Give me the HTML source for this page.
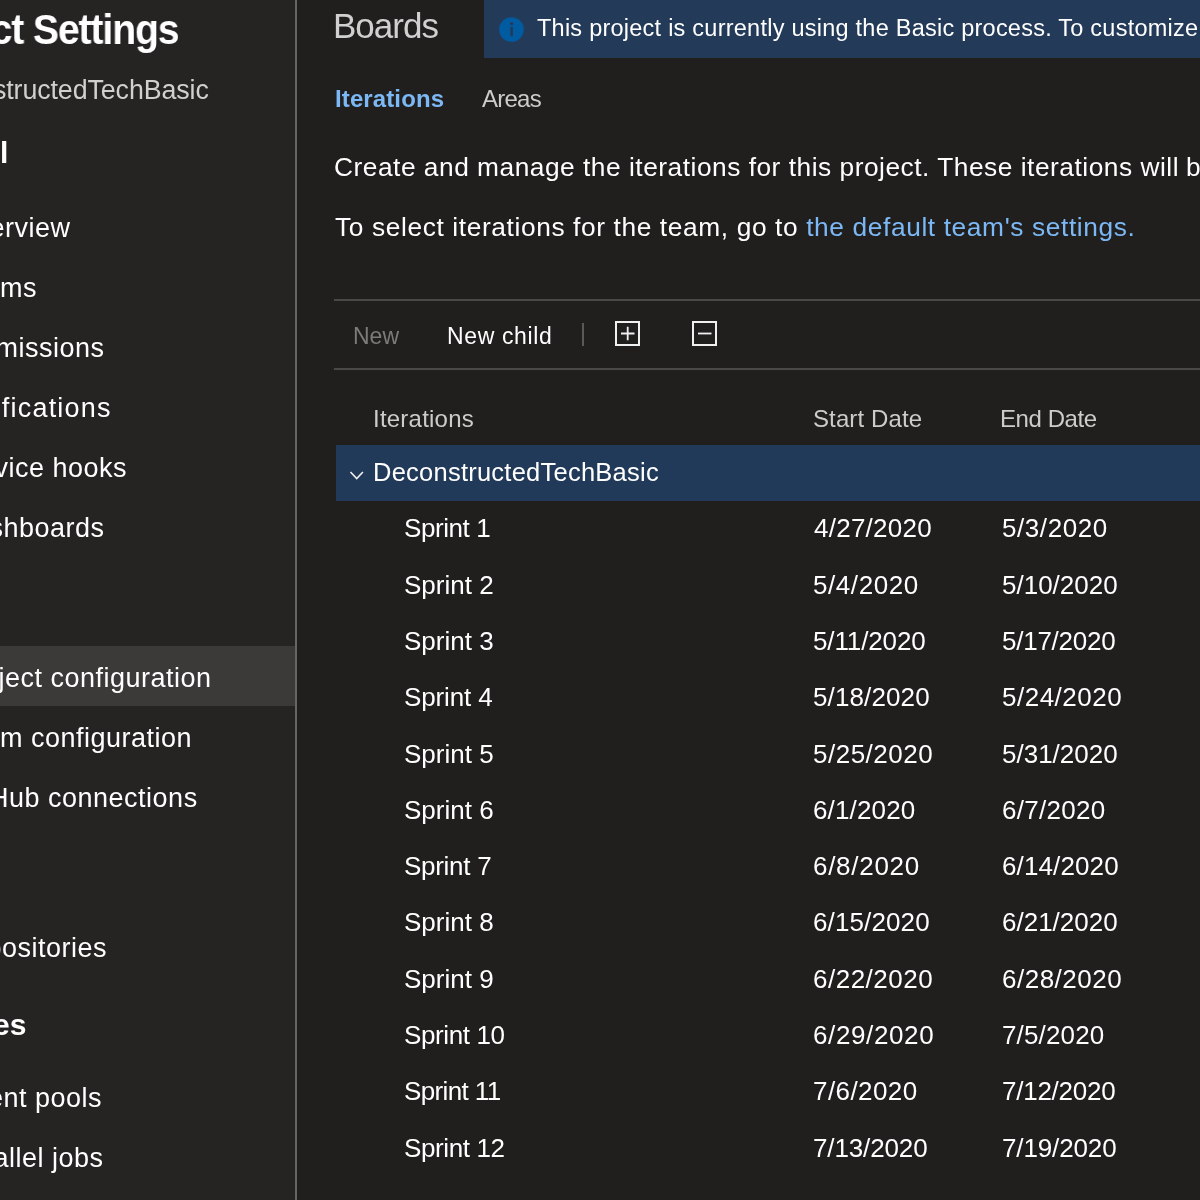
<!DOCTYPE html>
<html><head><meta charset="utf-8"><style>
html,body{margin:0;padding:0;width:1200px;height:1200px;overflow:hidden;background:#201f1e;font-family:"Liberation Sans",sans-serif}
.t{position:absolute;white-space:nowrap;will-change:transform}
.r{position:absolute}
</style></head><body>
<div class="r" style="left:0;top:0;width:295px;height:1200px;background:#252423"></div>
<div class="r" style="left:0;top:646px;width:295px;height:60px;background:#3b3a39"></div>
<div class="r" style="left:295px;top:0;width:2px;height:1200px;background:#666564"></div>
<div class="r" style="left:484px;top:0;width:716px;height:58px;background:#243a59"></div>
<svg class="r" style="left:499px;top:16.5px" width="25" height="25" viewBox="0 0 25 25">
<circle cx="12.5" cy="12.5" r="12.3" fill="#005ba1"/>
<circle cx="12.6" cy="6.6" r="1.6" fill="#243a59"/>
<rect x="11.3" y="9.8" width="2.6" height="9.4" rx="1" fill="#243a59"/>
</svg>
<div class="r" style="left:334px;top:298.5px;width:866px;height:2px;background:#4a4948"></div>
<div class="r" style="left:334px;top:368px;width:866px;height:2px;background:#4a4948"></div>
<div class="r" style="left:582px;top:323px;width:2px;height:23px;background:#5a5958"></div>
<svg class="r" style="left:614px;top:320px" width="28" height="28" viewBox="0 0 28 28">
<rect x="2" y="2" width="23" height="23" fill="none" stroke="#f0f0f0" stroke-width="2"/>
<path d="M7 13.5H20.5M13.7 6.7V20.2" stroke="#f0f0f0" stroke-width="1.8"/>
</svg>
<svg class="r" style="left:691px;top:320px" width="28" height="28" viewBox="0 0 28 28">
<rect x="2" y="2" width="23" height="23" fill="none" stroke="#f0f0f0" stroke-width="2"/>
<path d="M7 13.5H20.5" stroke="#f0f0f0" stroke-width="1.8"/>
</svg>
<div class="r" style="left:336px;top:445px;width:864px;height:56px;background:#223a5a"></div>
<svg class="r" style="left:348px;top:468px" width="18" height="14" viewBox="0 0 18 14">
<path d="M2.5 4L8.7 10.5L14.9 4" fill="none" stroke="#f0f0f0" stroke-width="1.6"/>
</svg>
<div class="t" id="e0" style="top:3.77px;font-size:42.5px;line-height:51.0px;font-weight:700;color:#ffffff;letter-spacing:-1.200px;transform:scaleX(0.92);transform-origin:right center;right:1021.50px">Project Settings</div>
<div class="t" id="e1" style="top:74.23px;font-size:26.8px;line-height:32.16px;font-weight:400;color:#d2d0ce;letter-spacing:-0.100px;right:991.50px">DeconstructedTechBasic</div>
<div class="t" id="e2" style="top:134.91px;font-size:30px;line-height:36.0px;font-weight:700;color:#ffffff;letter-spacing:0.000px;right:1191.50px">l</div>
<div class="t" id="e3" style="top:212.44px;font-size:27px;line-height:32.4px;font-weight:400;color:#ffffff;letter-spacing:0.500px;right:1129.40px">Overview</div>
<div class="t" id="e4" style="top:272.44px;font-size:27px;line-height:32.4px;font-weight:400;color:#ffffff;letter-spacing:0.500px;right:1163.20px">Teams</div>
<div class="t" id="e5" style="top:332.44px;font-size:27px;line-height:32.4px;font-weight:400;color:#ffffff;letter-spacing:0.500px;right:1095.30px">Permissions</div>
<div class="t" id="e6" style="top:392.44px;font-size:27px;line-height:32.4px;font-weight:400;color:#ffffff;letter-spacing:1.200px;right:1088.30px">Notifications</div>
<div class="t" id="e7" style="top:452.44px;font-size:27px;line-height:32.4px;font-weight:400;color:#ffffff;letter-spacing:0.500px;right:1072.70px">Service hooks</div>
<div class="t" id="e8" style="top:512.44px;font-size:27px;line-height:32.4px;font-weight:400;color:#ffffff;letter-spacing:0.500px;right:1095.70px">Dashboards</div>
<div class="t" id="e9" style="top:662.44px;font-size:27px;line-height:32.4px;font-weight:400;color:#ffffff;letter-spacing:0.500px;right:988.10px">Project configuration</div>
<div class="t" id="e10" style="top:722.44px;font-size:27px;line-height:32.4px;font-weight:400;color:#ffffff;letter-spacing:0.500px;right:1008.10px">Team configuration</div>
<div class="t" id="e11" style="top:782.44px;font-size:27px;line-height:32.4px;font-weight:400;color:#ffffff;letter-spacing:0.500px;right:1002.30px">GitHub connections</div>
<div class="t" id="e12" style="top:932.44px;font-size:27px;line-height:32.4px;font-weight:400;color:#ffffff;letter-spacing:0.500px;right:1092.50px">Repositories</div>
<div class="t" id="e13" style="top:1082.44px;font-size:27px;line-height:32.4px;font-weight:400;color:#ffffff;letter-spacing:0.500px;right:1098.10px">Agent pools</div>
<div class="t" id="e14" style="top:1142.44px;font-size:27px;line-height:32.4px;font-weight:400;color:#ffffff;letter-spacing:0.500px;right:1096.00px">Parallel jobs</div>
<div class="t" id="e15" style="top:1006.61px;font-size:30px;line-height:36.0px;font-weight:700;color:#ffffff;letter-spacing:0.000px;right:1173.50px">es</div>
<div class="t" id="e16" style="top:4.87px;font-size:35px;line-height:42.0px;font-weight:400;color:#d0d0d0;letter-spacing:-1.000px;left:332.50px">Boards</div>
<div class="t" id="e17" style="top:13.76px;font-size:23.5px;line-height:28.2px;font-weight:400;color:#ffffff;letter-spacing:0.242px;left:537.00px">This project is currently using the Basic process. To customize</div>
<div class="t" id="e18" style="top:84.88px;font-size:24px;line-height:28.8px;font-weight:700;color:#7cb8f5;letter-spacing:0.111px;left:334.50px">Iterations</div>
<div class="t" id="e19" style="top:84.88px;font-size:24px;line-height:28.8px;font-weight:400;color:#cecccb;letter-spacing:-0.750px;left:482.00px">Areas</div>
<div class="t" id="e20" style="top:151.61px;font-size:26.3px;line-height:31.56px;font-weight:400;color:#ffffff;letter-spacing:0.516px;left:334.00px">Create and manage the iterations for this project. These iterations will</div>
<div class="t" id="e21" style="top:151.61px;font-size:26.3px;line-height:31.56px;font-weight:400;color:#ffffff;letter-spacing:0.550px;left:1185.50px">be used by teams</div>
<div class="t" id="e22" style="top:212.11px;font-size:26.3px;line-height:31.56px;font-weight:400;color:#ffffff;letter-spacing:0.618px;left:335.00px">To select iterations for the team, go to <span style='color:#7cb8f5'>the default team's settings.</span></div>
<div class="t" id="e23" style="top:323.03px;font-size:23px;line-height:27.6px;font-weight:400;color:#7d7b79;letter-spacing:-0.000px;left:352.70px">New</div>
<div class="t" id="e24" style="top:323.03px;font-size:23px;line-height:27.6px;font-weight:400;color:#ffffff;letter-spacing:0.625px;left:446.50px">New child</div>
<div class="t" id="e25" style="top:404.78px;font-size:24px;line-height:28.8px;font-weight:400;color:#cecccb;letter-spacing:0.222px;left:372.70px">Iterations</div>
<div class="t" id="e26" style="top:404.78px;font-size:24px;line-height:28.8px;font-weight:400;color:#cecccb;letter-spacing:0.111px;left:812.90px">Start Date</div>
<div class="t" id="e27" style="top:404.78px;font-size:24px;line-height:28.8px;font-weight:400;color:#cecccb;letter-spacing:-0.429px;left:1000.10px">End Date</div>
<div class="t" id="e28" style="top:456.56px;font-size:25.5px;line-height:30.6px;font-weight:400;color:#ffffff;letter-spacing:0.238px;left:373.00px">DeconstructedTechBasic</div>
<div class="t" id="e29" style="top:513.29px;font-size:26px;line-height:31.2px;font-weight:400;color:#ffffff;letter-spacing:-0.429px;left:403.50px">Sprint 1</div>
<div class="t" id="e30" style="top:513.29px;font-size:26px;line-height:31.2px;font-weight:400;color:#ffffff;letter-spacing:0.250px;left:814.20px">4/27/2020</div>
<div class="t" id="e31" style="top:513.29px;font-size:26px;line-height:31.2px;font-weight:400;color:#ffffff;letter-spacing:0.571px;left:1001.60px">5/3/2020</div>
<div class="t" id="e32" style="top:569.60px;font-size:26px;line-height:31.2px;font-weight:400;color:#ffffff;letter-spacing:-0.000px;left:403.50px">Sprint 2</div>
<div class="t" id="e33" style="top:569.60px;font-size:26px;line-height:31.2px;font-weight:400;color:#ffffff;letter-spacing:0.571px;left:813.20px">5/4/2020</div>
<div class="t" id="e34" style="top:569.60px;font-size:26px;line-height:31.2px;font-weight:400;color:#ffffff;letter-spacing:-0.000px;left:1001.60px">5/10/2020</div>
<div class="t" id="e35" style="top:625.91px;font-size:26px;line-height:31.2px;font-weight:400;color:#ffffff;letter-spacing:-0.000px;left:403.50px">Sprint 3</div>
<div class="t" id="e36" style="top:625.91px;font-size:26px;line-height:31.2px;font-weight:400;color:#ffffff;letter-spacing:-0.125px;left:813.20px">5/11/2020</div>
<div class="t" id="e37" style="top:625.91px;font-size:26px;line-height:31.2px;font-weight:400;color:#ffffff;letter-spacing:-0.250px;left:1001.60px">5/17/2020</div>
<div class="t" id="e38" style="top:682.22px;font-size:26px;line-height:31.2px;font-weight:400;color:#ffffff;letter-spacing:-0.143px;left:403.50px">Sprint 4</div>
<div class="t" id="e39" style="top:682.22px;font-size:26px;line-height:31.2px;font-weight:400;color:#ffffff;letter-spacing:0.125px;left:813.20px">5/18/2020</div>
<div class="t" id="e40" style="top:682.22px;font-size:26px;line-height:31.2px;font-weight:400;color:#ffffff;letter-spacing:0.500px;left:1001.60px">5/24/2020</div>
<div class="t" id="e41" style="top:738.53px;font-size:26px;line-height:31.2px;font-weight:400;color:#ffffff;letter-spacing:0.000px;left:403.50px">Sprint 5</div>
<div class="t" id="e42" style="top:738.53px;font-size:26px;line-height:31.2px;font-weight:400;color:#ffffff;letter-spacing:0.500px;left:813.20px">5/25/2020</div>
<div class="t" id="e43" style="top:738.53px;font-size:26px;line-height:31.2px;font-weight:400;color:#ffffff;letter-spacing:-0.000px;left:1001.60px">5/31/2020</div>
<div class="t" id="e44" style="top:794.84px;font-size:26px;line-height:31.2px;font-weight:400;color:#ffffff;letter-spacing:0.000px;left:403.50px">Sprint 6</div>
<div class="t" id="e45" style="top:794.84px;font-size:26px;line-height:31.2px;font-weight:400;color:#ffffff;letter-spacing:0.143px;left:813.20px">6/1/2020</div>
<div class="t" id="e46" style="top:794.84px;font-size:26px;line-height:31.2px;font-weight:400;color:#ffffff;letter-spacing:0.286px;left:1001.60px">6/7/2020</div>
<div class="t" id="e47" style="top:851.15px;font-size:26px;line-height:31.2px;font-weight:400;color:#ffffff;letter-spacing:-0.286px;left:403.50px">Sprint 7</div>
<div class="t" id="e48" style="top:851.15px;font-size:26px;line-height:31.2px;font-weight:400;color:#ffffff;letter-spacing:0.714px;left:813.20px">6/8/2020</div>
<div class="t" id="e49" style="top:851.15px;font-size:26px;line-height:31.2px;font-weight:400;color:#ffffff;letter-spacing:0.125px;left:1001.60px">6/14/2020</div>
<div class="t" id="e50" style="top:907.46px;font-size:26px;line-height:31.2px;font-weight:400;color:#ffffff;letter-spacing:-0.000px;left:403.50px">Sprint 8</div>
<div class="t" id="e51" style="top:907.46px;font-size:26px;line-height:31.2px;font-weight:400;color:#ffffff;letter-spacing:0.125px;left:813.20px">6/15/2020</div>
<div class="t" id="e52" style="top:907.46px;font-size:26px;line-height:31.2px;font-weight:400;color:#ffffff;letter-spacing:-0.000px;left:1001.60px">6/21/2020</div>
<div class="t" id="e53" style="top:963.77px;font-size:26px;line-height:31.2px;font-weight:400;color:#ffffff;letter-spacing:0.000px;left:403.50px">Sprint 9</div>
<div class="t" id="e54" style="top:963.77px;font-size:26px;line-height:31.2px;font-weight:400;color:#ffffff;letter-spacing:0.500px;left:813.20px">6/22/2020</div>
<div class="t" id="e55" style="top:963.77px;font-size:26px;line-height:31.2px;font-weight:400;color:#ffffff;letter-spacing:0.500px;left:1001.60px">6/28/2020</div>
<div class="t" id="e56" style="top:1020.08px;font-size:26px;line-height:31.2px;font-weight:400;color:#ffffff;letter-spacing:-0.375px;left:403.50px">Sprint 10</div>
<div class="t" id="e57" style="top:1020.08px;font-size:26px;line-height:31.2px;font-weight:400;color:#ffffff;letter-spacing:0.625px;left:813.20px">6/29/2020</div>
<div class="t" id="e58" style="top:1020.08px;font-size:26px;line-height:31.2px;font-weight:400;color:#ffffff;letter-spacing:0.143px;left:1001.60px">7/5/2020</div>
<div class="t" id="e59" style="top:1076.39px;font-size:26px;line-height:31.2px;font-weight:400;color:#ffffff;letter-spacing:-0.625px;left:403.50px">Sprint 11</div>
<div class="t" id="e60" style="top:1076.39px;font-size:26px;line-height:31.2px;font-weight:400;color:#ffffff;letter-spacing:0.429px;left:813.20px">7/6/2020</div>
<div class="t" id="e61" style="top:1076.39px;font-size:26px;line-height:31.2px;font-weight:400;color:#ffffff;letter-spacing:-0.250px;left:1001.60px">7/12/2020</div>
<div class="t" id="e62" style="top:1132.70px;font-size:26px;line-height:31.2px;font-weight:400;color:#ffffff;letter-spacing:-0.375px;left:403.50px">Sprint 12</div>
<div class="t" id="e63" style="top:1132.70px;font-size:26px;line-height:31.2px;font-weight:400;color:#ffffff;letter-spacing:-0.125px;left:813.20px">7/13/2020</div>
<div class="t" id="e64" style="top:1132.70px;font-size:26px;line-height:31.2px;font-weight:400;color:#ffffff;letter-spacing:-0.125px;left:1001.60px">7/19/2020</div>
</body></html>
